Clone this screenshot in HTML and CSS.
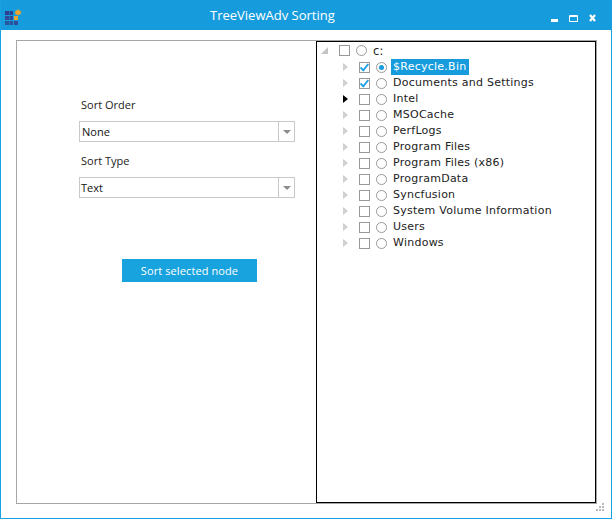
FILE: index.html
```html
<!DOCTYPE html>
<html lang="en">
<head>
    <meta charset="UTF-8">
    <title>TreeViewAdv Sorting</title>
    <link rel="stylesheet" href="styles.css">
</head>
<body>
    <div class="window">
        <header class="titlebar">
            <svg class="logo" width="22" height="26" viewBox="0 0 22 26">
                <rect x="5" y="11" width="4" height="4" fill="#2f3f8f"/>
                <rect x="9.500" y="11" width="3.500" height="4" fill="#2f3f8f"/>
                <rect x="5" y="16" width="4" height="4" fill="#2f4a96"/>
                <rect x="9.500" y="16" width="3.500" height="4" fill="#2f4a96"/>
                <rect x="14" y="16" width="4" height="4" fill="#f2a32c"/>
                <rect x="5" y="21" width="4" height="4" fill="#2a569f"/>
                <rect x="9.500" y="21" width="3.500" height="4" fill="#2a569f"/>
                <rect x="14" y="21" width="4" height="4" fill="#2f4a96"/>
                <path d="M18 9l1 1.500h1.500v1.500l1 0.500-1 1v1h-1.500l-1 1-1-1h-1.500v-1l-1-1 1-0.500v-1.500h1.500z" fill="#f2a32c"/>
            </svg>
            <h1 class="title">TreeViewAdv Sorting</h1>
            <div class="winbtns">
                <svg width="7" height="3" viewBox="0 0 7 3"><rect width="7" height="3" fill="#fff"/></svg>
                <svg width="9" height="7" viewBox="0 0 9 7"><path d="M0.500 0.500h8v6h-8z M0.500 1.500h8" fill="none" stroke="#fff"/></svg>
                <svg width="7" height="8" viewBox="0 0 7 8"><path d="M1 1l5 6 M6 1l-5 6" fill="none" stroke="#fff" stroke-width="2.200"/></svg>
            </div>
        </header>
        <main class="content">
            <div class="outer">
                <section class="panel">
                    <label class="field-label">Sort Order</label>
                    <div class="combo">
                        <span class="combo-text">None</span>
                        <span class="combo-btn"><i class="arrow"></i></span>
                    </div>
                    <label class="field-label second">Sort Type</label>
                    <div class="combo">
                        <span class="combo-text tight">Text</span>
                        <span class="combo-btn"><i class="arrow"></i></span>
                    </div>
                    <button class="sort-btn" type="button">Sort selected node</button>
                </section>
                <section class="tree">
                    <div class="row root">
                        <i class="expander open"></i><i class="check"></i><i class="radio"></i><span class="name">c:</span>
                    </div>
                    <div class="row">
                        <i class="expander"></i><i class="check"><svg width="9" height="9" viewBox="0 0 9 9"><path d="M0.500 4.500l2.800 2.800 5-6.300" fill="none" stroke="#1a9fdf" stroke-width="1.800"/></svg></i><i class="radio on"></i><span class="name selected">$Recycle.Bin</span>
                    </div>
                    <div class="row">
                        <i class="expander"></i><i class="check"><svg width="9" height="9" viewBox="0 0 9 9"><path d="M0.500 4.500l2.800 2.800 5-6.300" fill="none" stroke="#1a9fdf" stroke-width="1.800"/></svg></i><i class="radio"></i><span class="name">Documents and Settings</span>
                    </div>
                    <div class="row"><i class="expander dark"></i><i class="check"></i><i class="radio"></i><span class="name">Intel</span></div>
                    <div class="row"><i class="expander"></i><i class="check"></i><i class="radio"></i><span class="name">MSOCache</span></div>
                    <div class="row"><i class="expander"></i><i class="check"></i><i class="radio"></i><span class="name">PerfLogs</span></div>
                    <div class="row"><i class="expander"></i><i class="check"></i><i class="radio"></i><span class="name">Program Files</span></div>
                    <div class="row"><i class="expander"></i><i class="check"></i><i class="radio"></i><span class="name">Program Files (x86)</span></div>
                    <div class="row"><i class="expander"></i><i class="check"></i><i class="radio"></i><span class="name">ProgramData</span></div>
                    <div class="row"><i class="expander"></i><i class="check"></i><i class="radio"></i><span class="name">Syncfusion</span></div>
                    <div class="row"><i class="expander"></i><i class="check"></i><i class="radio"></i><span class="name">System Volume Information</span></div>
                    <div class="row"><i class="expander"></i><i class="check"></i><i class="radio"></i><span class="name">Users</span></div>
                    <div class="row"><i class="expander"></i><i class="check"></i><i class="radio"></i><span class="name">Windows</span></div>
                </section>
            </div>
            <div class="grip">
                <i></i><i></i><i></i><i></i><i></i><i></i>
            </div>
        </main>
    </div>
</body>
</html>
```

FILE: styles.css
```css
html, body {
    margin: 0;
    padding: 0;
}
.window {
    width: 612px;
    height: 519px;
    box-sizing: border-box;
    display: flex;
    flex-direction: column;
    border: 1px solid #17a2e3;
    border-top: none;
    background: #fff;
    overflow: hidden;
}
.titlebar {
    height: 30px;
    flex: none;
    margin: 0 -1px;
    background: #169cdc;
    display: flex;
    align-items: center;
    position: relative;
}
.logo {
    position: absolute;
    left: 0;
    top: 0;
}
.title {
    margin: 0 0 0 210px;
    font: normal 13px "Open Sans", sans-serif;
    color: #fff;
}
.winbtns {
    margin-left: auto;
    margin-right: 16px;
    margin-top: 6px;
    height: 8px;
    display: flex;
    align-items: flex-end;
    gap: 11px;
}
.content {
    flex: 1;
    position: relative;
    padding: 10px 14px 14px 15px;
    display: flex;
    min-height: 0;
}
.outer {
    flex: 1;
    border: 1px solid #a6a6a6;
    display: flex;
    min-height: 0;
}
.panel {
    width: 299px;
    flex: none;
    box-sizing: border-box;
    padding: 56px 21px 0 62px;
    display: flex;
    flex-direction: column;
    font: 11px "Open Sans", sans-serif;
    color: #222;
}
.field-label {
    margin-left: 2px;
    height: 16px;
    line-height: 16px;
}
.second {
    margin-top: 11px;
}
.combo {
    margin-top: 8px;
    height: 21px;
    box-sizing: border-box;
    border: 1px solid #c8c8c8;
    display: flex;
    align-items: center;
}
.combo-text {
    flex: 1;
    padding-left: 2px;
    color: #111;
}
.combo-text.tight {
    padding-left: 1px;
}
.combo-btn {
    width: 15px;
    height: 100%;
    border-left: 1px solid #c8c8c8;
    display: flex;
    align-items: center;
    justify-content: center;
}
.arrow {
    width: 0;
    height: 0;
    border-left: 4px solid transparent;
    border-right: 4px solid transparent;
    border-top: 4px solid #8c8c8c;
}
.sort-btn {
    margin: 61px 0 0 43px;
    width: 135px;
    height: 23px;
    padding: 0;
    border: none;
    background: #19a3de;
    color: #fff;
    font: 11px "Open Sans", sans-serif;
    letter-spacing: 0.1px;
}
.tree {
    flex: 1;
    box-sizing: border-box;
    border: 1px solid #000;
    padding-top: 1px;
    font: 11px "DejaVu Sans", sans-serif;
    letter-spacing: 0.25px;
    color: #222;
}
.row {
    height: 16px;
    display: flex;
    align-items: center;
    padding-left: 26px;
}
.expander {
    width: 0;
    height: 0;
    border-top: 4px solid transparent;
    border-bottom: 4px solid transparent;
    border-left: 5px solid #cfcfcf;
    margin-right: 11px;
}
.expander.dark {
    border-left-color: #000;
}
.expander.open {
    border-top: 0;
    border-left: 7px solid transparent;
    border-bottom: 7px solid #c4c4c4;
    margin-left: -22px;
    margin-right: 11px;
}
.check {
    width: 11px;
    height: 11px;
    box-sizing: border-box;
    border: 1px solid #999;
    margin-right: 6px;
    display: block;
}
.check svg {
    display: block;
}
.radio {
    width: 11px;
    height: 11px;
    box-sizing: border-box;
    border: 1px solid #999;
    border-radius: 50%;
    margin-right: 4px;
    background: #fff;
    position: relative;
}
.radio.on::after {
    content: "";
    position: absolute;
    left: 2px;
    top: 2px;
    width: 5px;
    height: 5px;
    border-radius: 50%;
    background: #169cdc;
}
.name {
    padding: 0 3px 0 2px;
    white-space: nowrap;
    line-height: 16px;
}
.root .check, .root .radio, .root .expander {
    margin-bottom: 2px;
}
.root .name {
    font-size: 11.500px;
}
.selected {
    background: #169cdc;
    color: #fff;
}
.grip {
    position: absolute;
    right: 7px;
    bottom: 7px;
    display: grid;
    grid-template-columns: repeat(3, 2px);
    gap: 1px;
}
.grip i {
    width: 2px;
    height: 2px;
    background: #bbb;
}
.grip i:nth-child(1) {
    grid-column: 3;
}
.grip i:nth-child(2) {
    grid-column: 2;
}
```
